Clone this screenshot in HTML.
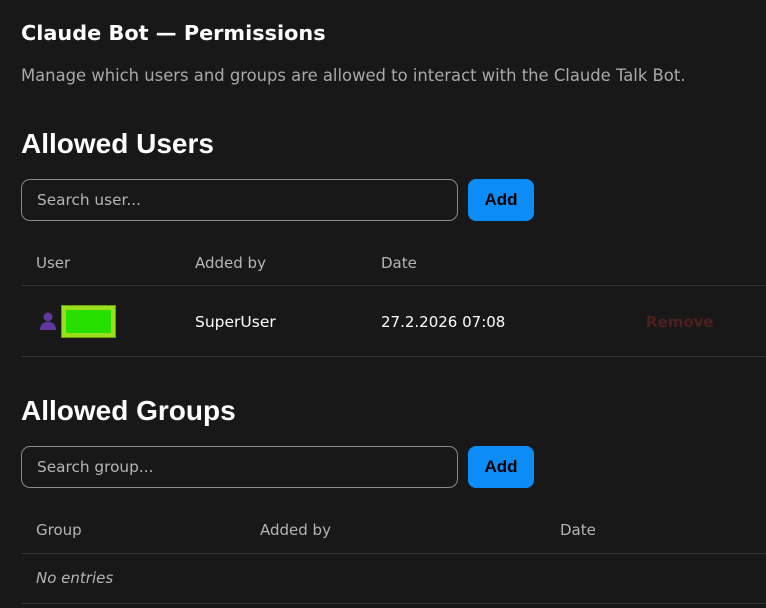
<!DOCTYPE html>
<html><head><style>
body{margin:0;background:#181818;color:#fff;font-family:"Liberation Sans",sans-serif;width:766px;height:608px;overflow:hidden;position:relative}
.a{position:absolute;white-space:nowrap}
.d{font-family:"DejaVu Sans",sans-serif}
.inp{position:absolute;left:21px;width:437px;height:42px;border:1px solid #8a8a8a;border-radius:9px;box-sizing:border-box;color:#b5b5b5;font-size:15.3px;padding-left:15px;line-height:40px;font-family:"DejaVu Sans",sans-serif}
.btn{position:absolute;left:468px;width:66px;height:42px;background:#0b8cf6;border-radius:8px;color:#000;font-weight:bold;font-size:17px;text-align:center;line-height:42px}
.line{position:absolute;left:21px;right:0;height:1px;background:#333}
.th{color:#b5b5b5;font-size:15px;font-family:"DejaVu Sans",sans-serif}
</style></head><body>
<div class="a d" style="left:21px;top:21px;font-size:20.8px;font-weight:bold">Claude Bot — Permissions</div>
<div class="a d" style="left:21px;top:66px;font-size:16.4px;color:#a9a9a9">Manage which users and groups are allowed to interact with the Claude Talk Bot.</div>
<div class="a" style="left:21px;top:128px;font-size:28px;font-weight:bold">Allowed Users</div>
<div class="inp" style="top:179px">Search user...</div>
<div class="btn" style="top:179px">Add</div>
<div class="a th" style="left:36px;top:254px">User</div>
<div class="a th" style="left:195px;top:254px">Added by</div>
<div class="a th" style="left:381px;top:254px">Date</div>
<div class="line" style="top:285px"></div>
<svg class="a" style="left:39px;top:311px" width="18" height="20" viewBox="0 0 18 20"><circle cx="9" cy="6" r="4.5" fill="#5e3a9e"/><path d="M1 19Q1 11 9 11Q17 11 17 19Z" fill="#5e3a9e"/></svg>
<div class="a" style="left:61px;top:305px;width:55px;height:33px;background:#9ae01a;box-sizing:border-box;border:1px solid #6a9a10"></div>
<div class="a" style="left:66px;top:310px;width:45px;height:23px;background:#27e000"></div>
<div class="a d" style="left:195px;top:313px;font-size:15.5px">SuperUser</div>
<div class="a d" style="left:381px;top:313px;font-size:15px">27.2.2026 07:08</div>
<div class="a d" style="left:646px;top:313px;font-size:15px;font-weight:bold;color:#4e1e1e">Remove</div>
<div class="line" style="top:356px"></div>
<div class="a" style="left:21px;top:395px;font-size:28px;font-weight:bold">Allowed Groups</div>
<div class="inp" style="top:446px">Search group...</div>
<div class="btn" style="top:446px">Add</div>
<div class="a th" style="left:36px;top:521px">Group</div>
<div class="a th" style="left:260px;top:521px">Added by</div>
<div class="a th" style="left:560px;top:521px">Date</div>
<div class="line" style="top:553px"></div>
<div class="a d" style="left:36px;top:569px;font-size:15px;font-style:italic;color:#b5b5b5">No entries</div>
<div class="line" style="top:603px"></div>
</body></html>
